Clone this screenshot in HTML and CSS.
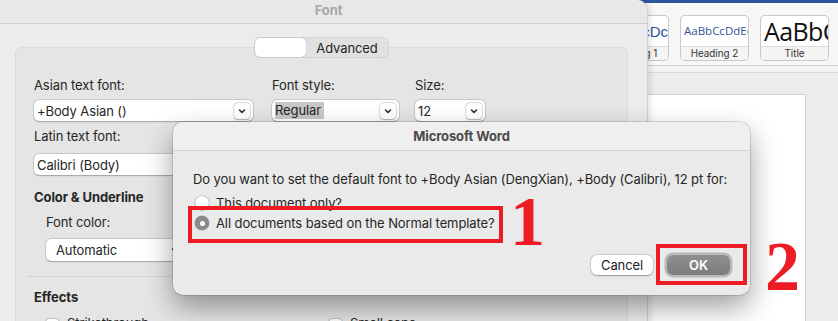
FILE: index.html
```html
<!DOCTYPE html>
<html>
<head>
<meta charset="utf-8">
<link rel="stylesheet" href="styles.css">
</head>
<body>
<div class="desktop">
  <div class="word-window">
    <div class="word-topbar"></div>
    <div class="ribbon">
      <div class="tile">
        <div class="tile-sample sample-h1">AaBbCcDc</div>
        <div class="tile-label">Heading 1</div>
      </div>
      <div class="tile">
        <div class="tile-sample sample-h2">AaBbCcDdEe</div>
        <div class="tile-label">Heading 2</div>
      </div>
      <div class="tile">
        <div class="tile-sample sample-title">AaBbCcDd</div>
        <div class="tile-label">Title</div>
      </div>
    </div>
    <div class="ribbon-strip"></div>
    <div class="canvas">
      <div class="page"></div>
    </div>
  </div>

  <div class="font-dialog">
    <div class="fd-title">Font</div>
    <div class="fd-body">
      <div class="seg">
        <div class="seg-item seg-active"></div>
        <div class="seg-item">Advanced</div>
      </div>
      <div class="group">
        <div class="font-grid">
          <div class="label">Asian text font:</div>
          <div class="label">Font style:</div>
          <div class="label">Size:</div>
          <div class="popup"><span>+Body Asian ()</span><span class="chev"><svg viewBox="0 0 16 16" width="16" height="16"><path d="M5.5 7 L8 9.5 L10.5 7" fill="none" stroke="#333" stroke-width="1.6" stroke-linecap="round" stroke-linejoin="round"/></svg></span></div>
          <div class="popup"><span class="hl">Regular</span><span class="chev"><svg viewBox="0 0 16 16" width="16" height="16"><path d="M5.5 7 L8 9.5 L10.5 7" fill="none" stroke="#333" stroke-width="1.6" stroke-linecap="round" stroke-linejoin="round"/></svg></span></div>
          <div class="popup"><span>12</span><span class="chev"><svg viewBox="0 0 16 16" width="16" height="16"><path d="M5.5 7 L8 9.5 L10.5 7" fill="none" stroke="#333" stroke-width="1.6" stroke-linecap="round" stroke-linejoin="round"/></svg></span></div>
        </div>
        <div class="label latin-label">Latin text font:</div>
        <div class="popup latin-popup"><span>Calibri (Body)</span></div>
        <div class="section">Color &amp; Underline</div>
        <div class="label indent color-label">Font color:</div>
        <div class="popup color-popup"><span>Automatic</span><svg class="plain-chev" viewBox="0 0 16 16" width="16" height="16"><path d="M5.5 7 L8 9.5 L10.5 7" fill="none" stroke="#333" stroke-width="1.6" stroke-linecap="round" stroke-linejoin="round"/></svg></div>
        <div class="separator"></div>
        <div class="section effects">Effects</div>
        <div class="checks">
          <div class="check"><span class="box"></span>Strikethrough</div>
          <div class="check"><span class="box"></span>Small caps</div>
        </div>
      </div>
    </div>
  </div>

  <div class="alert">
    <div class="alert-title">Microsoft Word</div>
    <div class="alert-body">
      <div class="question">Do you want to set the default font to +Body Asian (DengXian), +Body (Calibri), 12 pt for:</div>
      <div class="radio-row first"><span class="radio"></span>This document only?</div>
      <div class="radio-row"><span class="radio on"></span>All documents based on the Normal template?</div>
      <div class="buttons">
        <div class="btn cancel">Cancel</div>
        <div class="btn ok">OK</div>
      </div>
    </div>
  </div>

  <div class="mark-box mark-box-1"></div>
  <div class="mark-num mark-num-1">1</div>
  <div class="mark-box mark-box-2"></div>
  <div class="mark-num mark-num-2">2</div>
</div>
</body>
</html>
```

FILE: styles.css
```css
* { box-sizing: border-box; }
html, body { margin: 0; padding: 0; }
body {
  font-family: Inter, "Noto Sans", sans-serif;
  font-size: 13px;
  letter-spacing: -0.1px;
  color: #262626;
  background: #e9e9e9;
}
.desktop {
  position: relative;
  width: 838px;
  height: 321px;
  overflow: hidden;
}

/* Word window behind */
.word-window {
  position: absolute;
  left: 0; top: 0;
  width: 838px; height: 321px;
  display: flex;
  flex-direction: column;
  background: #ebebeb;
}
.word-topbar { height: 3px; background: #2b579a; flex: none; }
.ribbon {
  height: 63px;
  flex: none;
  background: #f7f7f7;
  display: flex;
  justify-content: flex-end;
  align-items: flex-start;
  gap: 11px;
  padding: 12px 9px 0 0;
  border-bottom: 1px solid #d4d4d4;
}
.tile {
  width: 69px;
  height: 46px;
  border: 1px solid #c9c9c9;
  border-radius: 4px;
  background: #fff;
  display: flex;
  flex-direction: column;
  overflow: hidden;
}
.tile-sample {
  flex: 1;
  white-space: nowrap;
  overflow: hidden;
  display: flex;
  align-items: center;
  padding-left: 3px;
  letter-spacing: 0;
  line-height: 1;
}
.sample-h1 { color: #2f5597; font-family: "Liberation Sans", sans-serif; font-size: 15px; justify-content: flex-end; padding-left: 0; }
.sample-h2 { color: #2f5597; font-family: "Open Sans", sans-serif; font-size: 11.5px; }
.sample-title { color: #111; font-family: "Open Sans", sans-serif; font-size: 25px; letter-spacing: -0.6px; font-weight: 400; padding-left: 3px; padding-top: 1px; }
.tile-label {
  height: 14px;
  flex: none;
  border-top: 1px solid #dedede;
  background: #f4f4f4;
  font-size: 9.8px;
  letter-spacing: 0;
  color: #333;
  text-align: center;
  line-height: 13px;
  white-space: nowrap;
  overflow: hidden;
}
.ribbon-strip {
  height: 7px;
  flex: none;
  background: #f2f2f2;
  border-bottom: 1px solid #d8d8d8;
}
.canvas {
  flex: 1;
  background: #ececec;
  padding: 21px 32px 0 0;
  display: flex;
  justify-content: flex-end;
}
.page {
  width: 400px;
  background: #fff;
  border: 1px solid #d2d2d2;
  border-bottom: none;
}

/* Font dialog */
.font-dialog {
  position: absolute;
  left: 0; top: 0;
  width: 648px;
  height: 340px;
  background: #ececec;
  border-top-right-radius: 11px;
  border-right: 1px solid #d0d0d0;
  box-shadow: 2px 0 6px rgba(0,0,0,0.12);
}
.fd-title {
  height: 24px;
  border-bottom: 1px solid #cfcfcf;
  background: #e8e8e8;
  border-top-right-radius: 11px;
  display: flex;
  justify-content: center;
  align-items: center;
  padding-bottom: 3px;
  padding-left: 10px;
  font-weight: 700;
  color: #a8a8a8;
}
.fd-body { padding: 13px 0 0 15px; }
.seg {
  position: relative;
  z-index: 1;
  margin-left: 239px;
  width: 135px;
  height: 21px;
  display: flex;
  background: #e1e1e1;
  border: 1px solid #d4d4d4;
  border-radius: 6px;
}
.seg-item {
  flex: none;
  display: flex;
  align-items: center;
  justify-content: center;
  color: #262626;
}
.seg-active {
  width: 51px;
  background: #fff;
  border-radius: 5px;
  box-shadow: 0 0 1px rgba(0,0,0,0.35);
}
.seg-item:last-child { flex: 1; }
.group {
  margin-top: -11px;
  width: 613px;
  height: 300px;
  background: #e5e5e5;
  border: 1px solid #dbdbdb;
  border-radius: 7px;
  padding: 29px 0 0 18px;
}
.label { line-height: 16px; white-space: nowrap; }
.font-grid {
  display: grid;
  grid-template-columns: 219px 127px 67px;
  column-gap: 19px;
  row-gap: 7px;
}
.font-grid > :nth-child(3), .font-grid > :nth-child(6) { margin-left: -3px; }
.popup {
  height: 21px;
  background: #fff;
  border-radius: 5px;
  box-shadow: 0 0 0 0.5px rgba(0,0,0,0.18), 0 0.5px 1.5px rgba(0,0,0,0.22);
  display: flex;
  align-items: center;
  justify-content: space-between;
  padding: 0 3px 0 3px;
  white-space: nowrap;
}
.hl { background: #c8c8c8; padding: 0 3px 0 0; margin-left: 0; line-height: 17px; }
.chev {
  width: 16px; height: 16px;
  border-radius: 4px;
  background: #fff;
  box-shadow: 0 0 0 0.5px rgba(0,0,0,0.2), 0 0.5px 1.5px rgba(0,0,0,0.25);
  display: flex;
}
.latin-label { margin-top: 7px; }
.latin-popup { width: 219px; margin-top: 10px; }
.section { font-weight: 700; line-height: 16px; margin-top: 14px; }
.indent { margin-left: 12px; }
.color-label { margin-top: 9px; }
.color-popup {
  margin-left: 12px;
  margin-top: 9px;
  width: 140px;
  height: 22px;
  padding-left: 10px;
}
.plain-chev { flex: none; }
.separator {
  margin: 15px 0 0 -7px;
  width: 592px;
  border-top: 1px solid #d3d3d3;
}
.effects { margin-top: 12px; }
.checks {
  margin-top: 8px;
  margin-left: 12px;
  display: flex;
  gap: 0;
}
.check {
  display: flex;
  align-items: center;
  gap: 8px;
  line-height: 16px;
  width: 283px;
}
.box {
  width: 13px; height: 13px;
  border-radius: 3px;
  background: #fff;
  box-shadow: 0 0 0 0.5px rgba(0,0,0,0.25), 0 0.5px 1.5px rgba(0,0,0,0.25);
  margin-top: 6px;
  align-self: flex-start;
}

/* Alert */
.alert {
  position: absolute;
  left: 173px; top: 122px;
  width: 577px; height: 173px;
  background: #eaeaea;
  border-radius: 10px;
  box-shadow: 0 0 0 0.5px rgba(0,0,0,0.25), 0 12px 28px rgba(0,0,0,0.38);
  overflow: hidden;
}
.alert-title {
  height: 29px;
  background: #efefef;
  border-bottom: 1px solid #d3d3d3;
  display: flex;
  align-items: center;
  justify-content: center;
  font-weight: 700;
  color: #4a4a4a;
}
.alert-body { padding: 20px 0 0 20px; }
.question { line-height: 16px; white-space: nowrap; }
.radio-row {
  display: flex;
  align-items: center;
  gap: 7px;
  height: 20px;
  padding-left: 2px;
  white-space: nowrap;
}
.radio-row.first { margin-top: 6px; }
.radio {
  width: 14px; height: 14px;
  border-radius: 50%;
  background: #fff;
  box-shadow: 0 0 0 0.5px rgba(0,0,0,0.25), 0 0.5px 1.5px rgba(0,0,0,0.25);
  flex: none;
  display: flex;
  align-items: center;
  justify-content: center;
}
.radio.on { background: #8a8a8a; box-shadow: 0 0 0 0.5px rgba(0,0,0,0.3); }
.radio.on::after {
  content: "";
  width: 5px; height: 5px;
  border-radius: 50%;
  background: #fff;
}
.buttons {
  display: flex;
  justify-content: flex-end;
  gap: 14px;
  padding-right: 20px;
  margin-top: 22px;
}
.btn {
  height: 20px;
  border-radius: 6px;
  display: flex;
  align-items: center;
  justify-content: center;
}
.cancel {
  width: 62px;
  background: #fff;
  color: #1e1e1e;
  box-shadow: 0 0 0 0.5px rgba(0,0,0,0.15), 0 0.5px 1.5px rgba(0,0,0,0.3);
}
.ok {
  width: 63px;
  background: linear-gradient(#8f8f8f, #7d7d7d);
  color: #fff;
  font-weight: 600;
  box-shadow: 0 0 0 2.5px #b9b9b9;
}

/* Annotations */
.mark-box {
  position: absolute;
  border: 4px solid #ed1c24;
}
.mark-box-1 { left: 188px; top: 206px; width: 315px; height: 37px; }
.mark-box-2 { left: 656px; top: 244px; width: 91px; height: 41px; }
.mark-num {
  position: absolute;
  font-family: "Liberation Serif", serif;
  font-weight: 700;
  font-size: 70px;
  line-height: 70px;
  letter-spacing: 0;
  color: #ed1c24;
}
.mark-num-1 { left: 510px; top: 187px; }
.mark-num-2 { left: 765px; top: 232px; }
```
